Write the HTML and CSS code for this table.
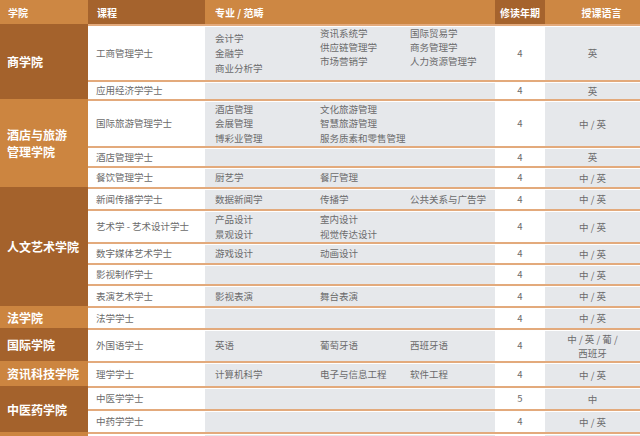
FILE: index.html
```html
<!DOCTYPE html>
<html lang="zh-CN">
<head>
<meta charset="utf-8">
<title>学院课程一览</title>
<link rel="stylesheet" href="styles.css">
</head>
<body>
<div class="table">
  <div class="th th-orange th-school">学院</div>
  <div class="th th-brown">课程</div>
  <div class="th th-orange th-major">专业 / 范畴</div>
  <div class="th th-brown th-center">修读年期</div>
  <div class="th th-orange th-center th-lang">授课语言</div>

  <div class="school brown rs2">商学院</div>
  <div class="cell course">工商管理学士</div>
  <div class="cell major">
    <div class="sub sub-wide">会计学<br>金融学<br>商业分析学</div>
    <div class="sub sub-top">资讯系统学<br>供应链管理学<br>市场营销学</div>
    <div class="sub sub-top">国际贸易学<br>商务管理学<br>人力资源管理学</div>
  </div>
  <div class="cell years">4</div>
  <div class="cell lang">英</div>

  <div class="cell course">应用经济学学士</div>
  <div class="cell major"></div>
  <div class="cell years">4</div>
  <div class="cell lang">英</div>

  <div class="school orange rs3">酒店与旅游<br>管理学院</div>
  <div class="cell course">国际旅游管理学士</div>
  <div class="cell major">
    <div class="sub">酒店管理<br>会展管理<br>博彩业管理</div>
    <div class="sub">文化旅游管理<br>智慧旅游管理<br>服务质素和零售管理</div>
    <div class="sub"></div>
  </div>
  <div class="cell years">4</div>
  <div class="cell lang">中 / 英</div>

  <div class="cell course">酒店管理学士</div>
  <div class="cell major"></div>
  <div class="cell years">4</div>
  <div class="cell lang">英</div>

  <div class="cell course">餐饮管理学士</div>
  <div class="cell major">
    <div class="sub">厨艺学</div>
    <div class="sub">餐厅管理</div>
    <div class="sub"></div>
  </div>
  <div class="cell years">4</div>
  <div class="cell lang">中 / 英</div>

  <div class="school brown rs5">人文艺术学院</div>
  <div class="cell course">新闻传播学学士</div>
  <div class="cell major">
    <div class="sub">数据新闻学</div>
    <div class="sub">传播学</div>
    <div class="sub">公共关系与广告学</div>
  </div>
  <div class="cell years">4</div>
  <div class="cell lang">中 / 英</div>

  <div class="cell course">艺术学 - 艺术设计学士</div>
  <div class="cell major">
    <div class="sub">产品设计<br>景观设计</div>
    <div class="sub">室内设计<br>视觉传达设计</div>
    <div class="sub"></div>
  </div>
  <div class="cell years">4</div>
  <div class="cell lang">中 / 英</div>

  <div class="cell course">数字媒体艺术学士</div>
  <div class="cell major">
    <div class="sub">游戏设计</div>
    <div class="sub">动画设计</div>
    <div class="sub"></div>
  </div>
  <div class="cell years">4</div>
  <div class="cell lang">中 / 英</div>

  <div class="cell course">影视制作学士</div>
  <div class="cell major"></div>
  <div class="cell years">4</div>
  <div class="cell lang">中 / 英</div>

  <div class="cell course">表演艺术学士</div>
  <div class="cell major">
    <div class="sub">影视表演</div>
    <div class="sub">舞台表演</div>
    <div class="sub"></div>
  </div>
  <div class="cell years">4</div>
  <div class="cell lang">中 / 英</div>

  <div class="school orange">法学院</div>
  <div class="cell course">法学学士</div>
  <div class="cell major"></div>
  <div class="cell years">4</div>
  <div class="cell lang">中 / 英</div>

  <div class="school brown">国际学院</div>
  <div class="cell course">外国语学士</div>
  <div class="cell major">
    <div class="sub">英语</div>
    <div class="sub">葡萄牙语</div>
    <div class="sub">西班牙语</div>
  </div>
  <div class="cell years">4</div>
  <div class="cell lang">中 / 英 / 葡 /<br>西班牙</div>

  <div class="school orange">资讯科技学院</div>
  <div class="cell course">理学学士</div>
  <div class="cell major">
    <div class="sub">计算机科学</div>
    <div class="sub">电子与信息工程</div>
    <div class="sub">软件工程</div>
  </div>
  <div class="cell years">4</div>
  <div class="cell lang">中 / 英</div>

  <div class="school brown rs2">中医药学院</div>
  <div class="cell course">中医学学士</div>
  <div class="cell major"></div>
  <div class="cell years">5</div>
  <div class="cell lang">中</div>

  <div class="cell course">中药学学士</div>
  <div class="cell major"></div>
  <div class="cell years">4</div>
  <div class="cell lang">中 / 英</div>

  <div class="school orange"></div>
  <div class="cell course"></div>
  <div class="cell major"></div>
  <div class="cell years"></div>
  <div class="cell lang"></div>
</div>
</body>
</html>
```

FILE: styles.css
```css
* {
  box-sizing: border-box;
}

html, body {
  margin: 0;
  padding: 0;
  background: #ffffff;
}

body {
  width: 640px;
  height: 436px;
  overflow: hidden;
  font-family: "Noto Sans CJK SC", "Noto Sans", sans-serif;
  color: #6b6b6b;
}

.table {
  display: grid;
  grid-template-columns: 88px 117px 290px 50px 95px;
  grid-template-rows: 24px 56px 19px 47px 20px 21px 22px 33px 21px 21px 22px 22px 33px 25px 23px 23px 20px;
}

.th {
  display: flex;
  align-items: center;
  color: #ffffff;
  font-weight: 700;
  font-size: 10px;
  padding-left: 9px;
}

.th-school {
  padding-left: 8px;
}

.th-major {
  padding-left: 10px;
}

.th-center {
  justify-content: center;
  padding-left: 0;
}

.th-lang {
  padding-left: 18px;
}

.th-orange {
  background: #cd8743;
}

.th-brown {
  background: #a5632d;
}

.school {
  display: flex;
  align-items: center;
  padding-left: 7px;
  color: #ffffff;
  font-weight: 700;
  font-size: 12px;
  line-height: 17px;
}

.school.orange {
  background: #cc8540;
}

.school.brown {
  background: #a4622c;
}

.rs2 { grid-row: span 2; }
.rs3 { grid-row: span 3; }
.rs5 { grid-row: span 5; }

.cell {
  display: flex;
  align-items: center;
  font-size: 9.5px;
  line-height: 14.5px;
  border-top: 2px solid #e3aa7c;
  box-shadow: inset 0 1px 0 #ffffff;
}

.course {
  background: #ffffff;
  padding-left: 8px;
}

.major {
  background: #e6e8eb;
  display: grid;
  grid-template-columns: 105px 90px 1fr;
  align-items: center;
  padding-left: 10px;
}

.sub-wide {
  line-height: 15px;
}

.sub-top {
  align-self: start;
  line-height: 14px;
}

.years {
  background: #ffffff;
  justify-content: center;
}

.lang {
  background: #e6e8eb;
  justify-content: center;
  text-align: center;
  line-height: 14px;
}
```
